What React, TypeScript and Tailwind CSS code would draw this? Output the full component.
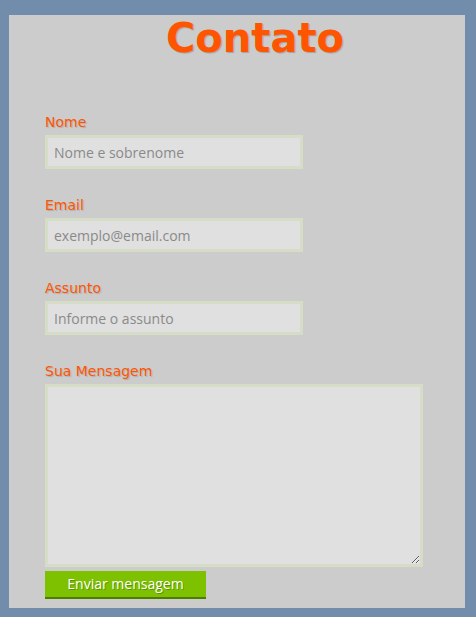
import React from 'react';

const fields = [
  { id: 'nome', label: 'Nome', placeholder: 'Nome e sobrenome', type: 'text' },
  { id: 'email', label: 'Email', placeholder: 'exemplo@email.com', type: 'email' },
  { id: 'assunto', label: 'Assunto', placeholder: 'Informe o assunto', type: 'text' },
];

const labelCls =
  "block h-[20px] mb-[3px] text-[14px] leading-[20px] text-[#ff5500] [text-shadow:1px_1px_1px_rgba(0,0,0,0.15)] [font-family:'DejaVu_Sans',sans-serif]";

const inputCls =
  "block h-[34px] bg-[#e0e0e0] border-[3px] border-[#d5ddc6] px-[6px] text-[14px] text-[#555] placeholder:text-[#8a8a8a] outline-none [font-family:'Open_Sans',sans-serif]";

function App() {
  return (
    <div className="min-h-screen bg-[#718dab] pt-[15px] pl-[9px] pr-[11px] pb-[9px]">
      <div className="h-[593px] bg-[#cccccc] pl-[36px]">
        <h1 className="text-center text-[40px] leading-[46px] font-bold text-[#ff5500] [text-shadow:1px_1px_1px_rgba(0,0,0,0.2)] [font-family:'DejaVu_Sans',sans-serif]">
          Contato
        </h1>
        <form className="mt-[51px]">
          {fields.map((f) => (
            <div key={f.id} className="mb-[26px]">
              <label htmlFor={f.id} className={labelCls}>{f.label}</label>
              <input id={f.id} type={f.type} placeholder={f.placeholder} className={inputCls + ' w-[258px]'} />
            </div>
          ))}
          <div>
            <label htmlFor="mensagem" className={labelCls}>Sua Mensagem</label>
            <textarea id="mensagem" className={inputCls + ' w-[378px] h-[183px] resize'} />
          </div>
          <button
            type="submit"
            className="mt-[4px] block w-[161px] h-[28px] bg-[#7dc100] border-b-2 border-[#4f7d00] text-white text-[14px] leading-[26px] [text-shadow:1px_1px_0_rgba(0,0,0,0.25)] [font-family:'Open_Sans',sans-serif]"
          >
            Enviar mensagem
          </button>
        </form>
      </div>
    </div>
  );
}

export default App
